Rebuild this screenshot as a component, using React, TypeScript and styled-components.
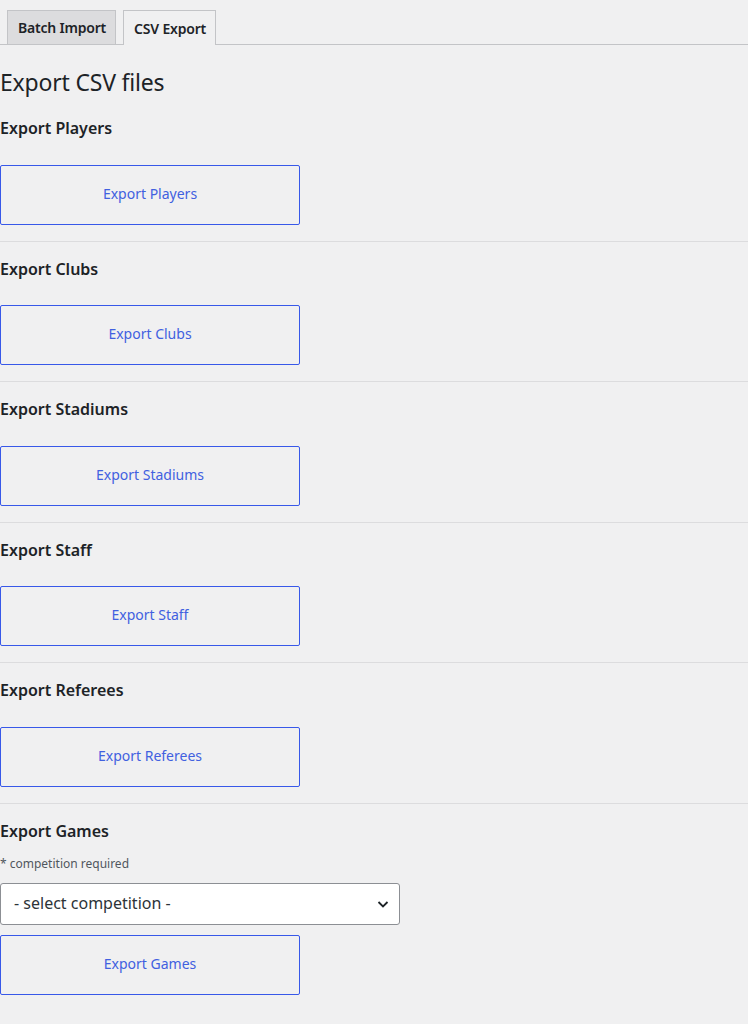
import React from 'react';
import styled, { createGlobalStyle } from 'styled-components';

const GlobalStyle = createGlobalStyle`
  body {
    margin: 0;
    background: #f0f0f1;
    font-family: 'Noto Sans', 'Open Sans', sans-serif;
    color: #1d2327;
  }
`;

const Tabs = styled.nav`
  display: flex;
  gap: 7px;
  padding: 10px 0 0 7px;
  border-bottom: 1px solid #c3c4c7;
`;

const Tab = styled.div<{ active?: boolean }>`
  box-sizing: border-box;
  padding: 0 9px 0 10px;
  display: flex;
  align-items: center;
  font-size: 14px;
  font-weight: 600;
  letter-spacing: -0.2px;
  color: #1d2327;
  border: 1px solid #c3c4c7;
  border-bottom: 0;
  background: ${(p) => (p.active ? '#f0f0f1' : '#dcdcde')};
  margin-bottom: ${(p) => (p.active ? '-1px' : '0')};
  height: ${(p) => (p.active ? '35px' : '34px')};
`;

const Page = styled.main`
  padding: 0;
`;

const Title = styled.h1`
  margin: 23px 0 20px;
  font-size: 23px;
  font-weight: 400;
  line-height: 29px;
  letter-spacing: -0.2px;
`;

const Section = styled.section`
  padding-bottom: 16px;
  margin-bottom: 16px;
  border-bottom: 1px solid #dcdcde;

  &:last-child {
    border-bottom: 0;
  }
`;

const Heading = styled.h2`
  margin: 0 0 25.5px;
  font-size: 16px;
  font-weight: 600;
  line-height: 22px;
`;

const Note = styled.p`
  margin: -12px 0 11px;
  font-size: 12px;
  line-height: 17px;
  color: #50575e;
`;

const ExportButton = styled.button`
  display: flex;
  align-items: center;
  justify-content: center;
  width: 300px;
  height: 60px;
  padding: 0 0 3px;
  background: transparent;
  border: 1px solid #3858e9;
  border-radius: 2px;
  color: #4160e0;
  font-family: inherit;
  font-size: 14px;
  cursor: pointer;
`;

const SelectWrap = styled.div`
  position: relative;
  width: 400px;
  height: 42px;
  margin-bottom: 10px;
`;

const Select = styled.select`
  width: 100%;
  height: 100%;
  appearance: none;
  box-sizing: border-box;
  background: #fff;
  border: 1px solid #8c8f94;
  border-radius: 3px;
  padding: 0 30px 2px 13px;
  font-family: inherit;
  font-size: 16px;
  color: #2c3338;
`;

const Chevron = styled.svg`
  position: absolute;
  right: 11px;
  top: 15px;
  pointer-events: none;
`;

const groups = ['Players', 'Clubs', 'Stadiums', 'Staff', 'Referees'];

export default function App() {
  return (
    <>
      <GlobalStyle />
      <Tabs>
        <Tab>Batch Import</Tab>
        <Tab active>CSV Export</Tab>
      </Tabs>
      <Page>
        <Title>Export CSV files</Title>
        {groups.map((g) => (
          <Section key={g}>
            <Heading>Export {g}</Heading>
            <ExportButton>Export {g}</ExportButton>
          </Section>
        ))}
        <Section>
          <Heading>Export Games</Heading>
          <Note>* competition required</Note>
          <SelectWrap>
            <Select defaultValue="">
              <option value="">- select competition -</option>
            </Select>
            <Chevron width="12" height="12" viewBox="0 0 12 12">
              <path d="M1.5 4l4.5 4.5L10.5 4" fill="none" stroke="#1d2327" strokeWidth="1.8" />
            </Chevron>
          </SelectWrap>
          <ExportButton>Export Games</ExportButton>
        </Section>
      </Page>
    </>
  );
}
